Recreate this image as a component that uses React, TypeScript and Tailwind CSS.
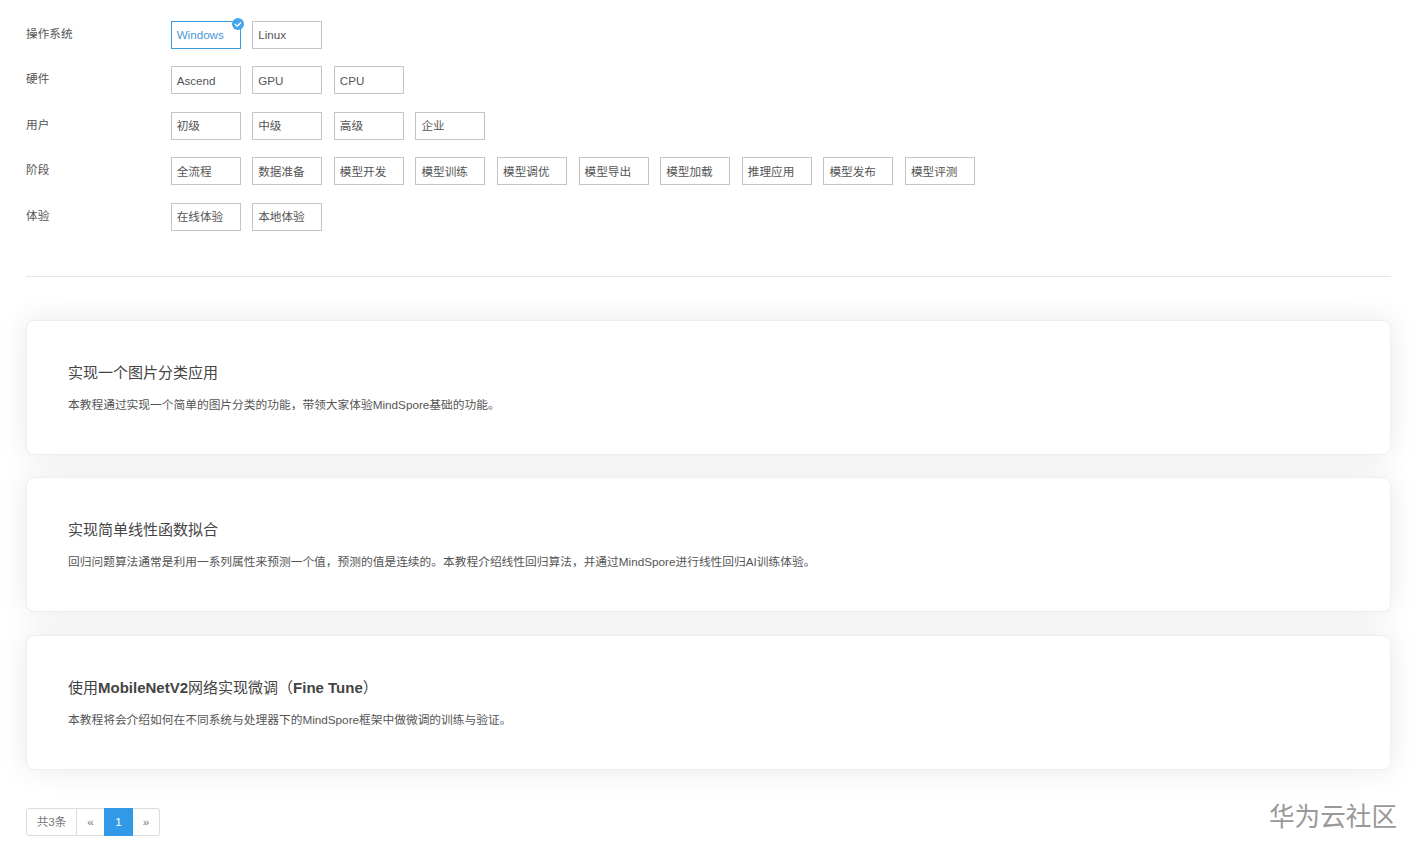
const filters = [
  { label: '操作系统', options: ['Windows', 'Linux'] },
  { label: '硬件', options: ['Ascend', 'GPU', 'CPU'] },
  { label: '用户', options: ['初级', '中级', '高级', '企业'] },
  {
    label: '阶段',
    options: ['全流程', '数据准备', '模型开发', '模型训练', '模型调优', '模型导出', '模型加载', '推理应用', '模型发布', '模型评测'],
  },
  { label: '体验', options: ['在线体验', '本地体验'] },
];

const tutorials = [
  {
    title: <>实现一个图片分类应用</>,
    desc: '本教程通过实现一个简单的图片分类的功能\uFF0C带领大家体验MindSpore基础的功能。',
  },
  {
    title: <>实现简单线性函数拟合</>,
    desc: '回归问题算法通常是利用一系列属性来预测一个值\uFF0C预测的值是连续的。本教程介绍线性回归算法\uFF0C并通过MindSpore进行线性回归AI训练体验。',
  },
  {
    title: (
      <>
        使用<b className="font-bold">MobileNetV2</b>网络实现微调{'\uFF08'}<b className="font-bold">Fine Tune</b>{'\uFF09'}
      </>
    ),
    desc: '本教程将会介绍如何在不同系统与处理器下的MindSpore框架中做微调的训练与验证。',
  },
];

function CheckBadge() {
  return (
    <svg viewBox="0 0 12 12" aria-hidden="true" className="absolute -right-[4px] -top-[4px] h-3 w-3">
      <circle cx="6" cy="6" r="6" fill="#44a6ee" />
      <path d="M3 6l2.2 2.2L9 4.4" fill="none" stroke="#fff" strokeWidth="1.4" />
    </svg>
  );
}

export default function App() {
  return (
    <div lang="zh-CN" className="relative h-[857px] overflow-hidden bg-white pr-[25px] pl-[26px] pt-[20.75px] font-['Liberation_Sans','Noto_Sans_CJK_SC',sans-serif] text-[#555]">
      <div className="flex flex-col gap-[17.5px] border-b border-[#e5e5e5] pb-[45.25px]">
        {filters.map((row) => (
          <div key={row.label} className="flex items-start">
            <div className="w-[144.65px] pt-[5px] text-[11.64px] leading-[16px]">{row.label}</div>
            <div className="flex gap-[11.6px]">
              {row.options.map((opt) => {
                const active = opt === 'Windows';
                return (
                  <button
                    key={opt}
                    type="button"
                    className={
                      active
                        ? 'relative h-7 w-[70px] border border-[#3b9ae0] pl-[5px] text-left text-[11.64px] text-[#4a98d8]'
                        : 'relative h-7 w-[70px] border border-[#c4c4c4] pl-[5px] text-left text-[11.64px] text-[#555]'
                    }
                  >
                    {opt}
                    {active ? <CheckBadge /> : null}
                  </button>
                );
              })}
            </div>
          </div>
        ))}
      </div>

      <div className="mt-[43px] flex flex-col gap-[22.25px]">
        {tutorials.map((t) => (
          <div
            key={t.desc}
            className="h-[135px] rounded-[8px] border border-[#eee] bg-white pl-[41px] pt-[42px] shadow-[0_0_30px_rgba(0,0,0,0.09)]"
          >
            <h3 className="text-[15px] leading-[20px] font-normal text-[#444]">{t.title}</h3>
            <p className="mt-[13px] text-[11.72px] leading-[18px] text-[#555]">{t.desc}</p>
          </div>
        ))}
      </div>

      <div className="mt-[38.5px] flex h-7 w-fit text-[11.64px] text-[#777]">
        <span className="flex w-[51px] items-center justify-center rounded-l-[3px] border border-[#ddd]">共3条</span>
        <span className="-ml-px flex w-[29px] items-center justify-center border border-[#ddd]">«</span>
        <span className="-ml-px flex w-[29px] items-center justify-center bg-[#3199e6] text-white">1</span>
        <span className="flex w-[27px] items-center justify-center rounded-r-[3px] border border-l-0 border-[#ddd]">»</span>
      </div>

      <div className="absolute right-[19px] bottom-[26px] text-[25.6px] leading-[28px] text-[#999]">华为云社区</div>
    </div>
  );
}
